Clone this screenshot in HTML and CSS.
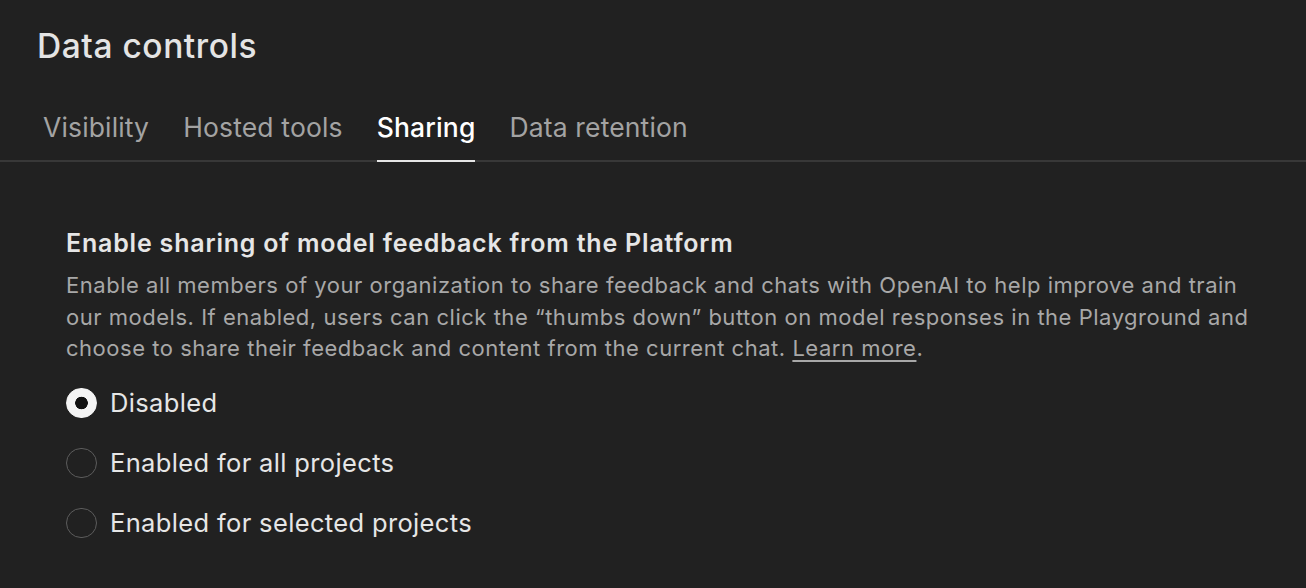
FILE: index.html
```html
<!DOCTYPE html>
<html lang="en">
<head>
<meta charset="utf-8">
<link rel="stylesheet" href="styles.css">
</head>
<body>
<div class="page">
  <h1 class="title">Data controls</h1>
  <nav class="tabs">
    <div class="tab">Visibility</div>
    <div class="tab">Hosted tools</div>
    <div class="tab active">Sharing</div>
    <div class="tab">Data retention</div>
  </nav>
  <section class="content">
    <h2 class="heading">Enable sharing of model feedback from the Platform</h2>
    <p class="desc">Enable all members of your organization to share feedback and chats with OpenAI to help improve and train our models. If enabled, users can click the “thumbs down” button on model responses in the Playground and choose to share their feedback and content from the current chat. <a class="link" href="#">Learn more</a>.</p>
    <div class="options">
      <label class="option"><span class="radio checked"></span><span class="label">Disabled</span></label>
      <label class="option"><span class="radio"></span><span class="label">Enabled for all projects</span></label>
      <label class="option"><span class="radio"></span><span class="label">Enabled for selected projects</span></label>
    </div>
  </section>
</div>
</body>
</html>
```
FILE: styles.css
```css
html, body {
  margin: 0;
  padding: 0;
  background: #212121;
}
body {
  font-family: Inter, "Noto Sans", sans-serif;
  color: #ececec;
  width: 1306px;
  height: 588px;
  overflow: hidden;
}
.title {
  margin: 0;
  padding: 23.5px 0 0 37px;
  font-size: 33.5px;
  line-height: 44px;
  font-weight: 500;
  color: #e4e4e4;
  letter-spacing: 0.55px;
}
.tabs {
  display: flex;
  gap: 34px;
  padding: 0 0 0 43px;
  margin-top: 41.5px;
  border-bottom: 2px solid #383838;
}
.tab {
  font-size: 26.5px;
  line-height: 36px;
  padding-bottom: 15px;
  color: #a3a3a3;
  margin-bottom: -2px;
  border-bottom: 2px solid transparent;
  letter-spacing: 0.15px;
}
.tab.active {
  color: #ffffff;
  font-weight: 500;
  border-bottom-color: #e6e6e6;
}
.content {
  padding: 64.5px 0 0 66px;
}
.heading {
  margin: 0;
  font-size: 25px;
  line-height: 32px;
  font-weight: 600;
  color: #e6e6e6;
  letter-spacing: 0.8px;
}
.desc {
  margin: 11.6px 0 0 0;
  font-size: 22px;
  line-height: 31.5px;
  color: #a8a8a8;
  width: 1195px;
  letter-spacing: 0.52px;
}
.link {
  color: #a8a8a8;
  text-decoration: underline;
  text-decoration-thickness: 1.5px;
  text-underline-offset: 4px;
}
.options {
  display: flex;
  flex-direction: column;
  gap: 28.5px;
  margin-top: 22.5px;
}
.option {
  display: flex;
  align-items: center;
  gap: 13.5px;
}
.radio {
  width: 28.5px;
  height: 28.5px;
  border-radius: 50%;
  border: 1.5px solid #5c5c5c;
  box-sizing: content-box;
  flex: none;
}
.radio.checked {
  border-color: #f4f4f4;
  background: radial-gradient(circle, #111 0 6px, #f4f4f4 6.6px);
}
.label {
  font-size: 25.5px;
  line-height: 31.5px;
  color: #e6e6e6;
  letter-spacing: 0.35px;
}
```
